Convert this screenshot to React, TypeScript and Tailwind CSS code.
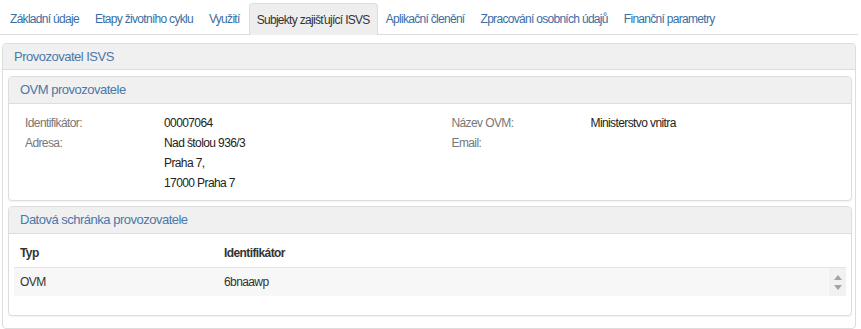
import React from 'react';

const tabs = [
    'Základní údaje',
    'Etapy životního cyklu',
    'Využití',
    'Subjekty zajišťující ISVS',
    'Aplikační členění',
    'Zpracování osobních údajů',
    'Finanční parametry',
];

const Field: React.FC<{ label: string; children?: React.ReactNode }> = ({ label, children }) => (
    <div className="flex">
        <div className="w-[139px] shrink-0 text-[#777]">{label}</div>
        <div className="text-[#222]">{children}</div>
    </div>
);

const Panel: React.FC<{ title: string; className?: string; children: React.ReactNode }> = ({ title, className = '', children }) => (
    <div className={`border border-[#ddd] rounded-[4px] bg-white shadow-[0_1px_1px_rgba(0,0,0,0.05)] ${className}`}>
        <div className="h-[27px] flex items-center px-[11px] bg-[#f0f0f0] border-b border-[#ddd] rounded-t-[3px] text-[13px] tracking-[-0.5px] text-[#4b77a9]">
            {title}
        </div>
        {children}
    </div>
);

export default function App() {
    return (
        <div className="w-[861px] h-[329px] bg-white text-[12px] tracking-[-0.6px] font-['Liberation_Sans',Arial,sans-serif] text-[#333]">
            {/* tab strip */}
            <div className="flex pt-[3px] pl-[3px] border-b border-[#ddd] w-[858px] h-[35px] tracking-[-0.7px]">
                {tabs.map((t) => {
                    const active = t === 'Subjekty zajišťující ISVS';
                    return (
                        <div
                            key={t}
                            className={
                                active
                                    ? 'h-[32px] px-[7px] mr-[1px] flex items-center bg-[#eee] border border-b-0 border-[#ddd] rounded-t-[4px] text-[#333]'
                                    : 'h-[31px] px-[7px] mr-[2px] flex items-center text-[#3a6ea5]'
                            }
                        >
                            {t}
                        </div>
                    );
                })}
            </div>

            {/* outer panel */}
            <div className="mt-[8px] ml-[2px] w-[854px] h-[286px] border border-[#ddd] rounded-[4px] bg-white">
                <div className="h-[26px] flex items-center px-[11px] bg-[#f0f0f0] border-b border-[#ddd] rounded-t-[3px] text-[13px] tracking-[-0.5px] text-[#4b77a9]">
                    Provozovatel ISVS
                </div>
                <div className="pt-[6px] pl-[5px] pr-[3px]">
                    <Panel title="OVM provozovatele" className="h-[125px]">
                        <div className="flex pt-[9px] pl-[16px] leading-[20px]">
                            <div className="w-[427px] flex flex-col">
                                <Field label="Identifikátor:">00007064</Field>
                                <Field label="Adresa:">
                                    <div>Nad štolou 936/3</div>
                                    <div>Praha 7,</div>
                                    <div>17000 Praha 7</div>
                                </Field>
                            </div>
                            <div className="w-[400px] flex flex-col">
                                <Field label="Název OVM:">Ministerstvo vnitra</Field>
                                <Field label="Email:" />
                            </div>
                        </div>
                    </Panel>

                    <Panel title="Datová schránka provozovatele" className="mt-[5px] h-[110px]">
                        <div className="px-[5px] pr-[5px]">
                            <div className="flex h-[34px] items-center pt-[4px] leading-[20px] font-bold text-[#333] border-b border-[#e4e4e4]">
                                <div className="w-[210px] pl-[6px]">Typ</div>
                                <div>Identifikátor</div>
                            </div>
                            <div className="flex h-[28px]">
                                <div className="flex-1 flex items-center bg-[#f7f7f7]">
                                    <div className="w-[210px] pl-[6px]">OVM</div>
                                    <div>6bnaawp</div>
                                </div>
                                <div className="w-[17px] bg-[#f1f1f1] flex flex-col items-center justify-center gap-[5px]">
                                    <svg width="8" height="5" viewBox="0 0 8 5"><path d="M0 5 L4 0 L8 5 Z" fill="#a3a3a3" /></svg>
                                    <svg width="8" height="5" viewBox="0 0 8 5"><path d="M0 0 L8 0 L4 5 Z" fill="#a3a3a3" /></svg>
                                </div>
                            </div>
                        </div>
                    </Panel>
                </div>
            </div>
        </div>
    );
}
